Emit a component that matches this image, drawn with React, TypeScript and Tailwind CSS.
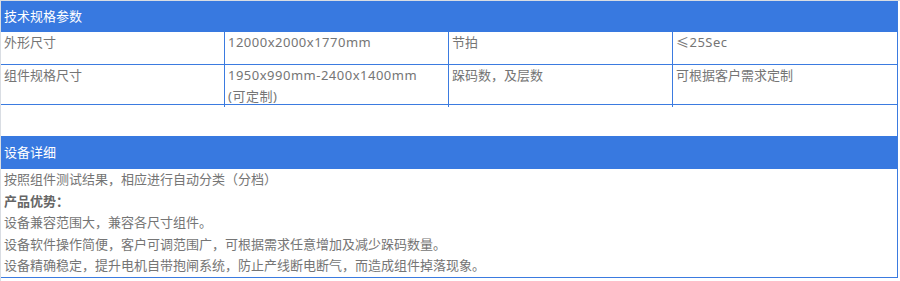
import React from 'react';

const specRows = [
  { h: 'h-[33px]', cells: ['外形尺寸', '12000x2000x1770mm', '节拍', '≤25Sec'] },
  {
    h: 'h-[40px]',
    cells: ['组件规格尺寸', '1950x990mm-2400x1400mm\n(可定制)', '跺码数，及层数', '可根据客户需求定制'],
  },
];

const details = [
  '设备兼容范围大，兼容各尺寸组件。',
  '设备软件操作简便，客户可调范围广，可根据需求任意增加及减少跺码数量。',
  '设备精确稳定，提升电机自带抱闸系统，防止产线断电断气，而造成组件掉落现象。',
];

// latin values render a touch wider in the original
const isLatin = (s: string) => /^[\x20-\x7e≤]/.test(s);

export default function App() {
  return (
    <div
      className="w-[900px] h-[281px] bg-white border-t border-l border-[#d9dde3] text-[13px] text-[#757575]"
      style={{ fontFamily: '"Noto Sans", "Noto Sans CJK SC", sans-serif' }}
    >
      <div className="w-[897px] border-r border-b border-[#3b7be0]">
        {/* 技术规格参数 */}
        <div className="h-[31px] bg-[#3879e0] pl-[3px] leading-[30px] text-white">技术规格参数</div>
        {specRows.map((row, i) => (
          <div key={i} className={`grid grid-cols-4 border-b border-[#3b7be0] ${row.h}`}>
            {row.cells.map((c, j) => (
              <div
                key={j}
                className={`pl-[3px] leading-[21px] whitespace-pre-line ${j < 3 ? 'border-r border-[#3b7be0]' : ''} ${
                  isLatin(c) ? 'tracking-[0.5px]' : ''
                }`}
              >
                {c}
              </div>
            ))}
          </div>
        ))}
        <div className="h-[31px]" />

        {/* 设备详细 */}
        <div className="h-[33px] bg-[#3879e0] pl-[3px] leading-[32px] text-white">设备详细</div>
        <div className="pl-[3px] leading-[21.6px]">
          <p>按照组件测试结果，相应进行自动分类（分档）</p>
          <p className="font-bold text-[#666]">产品优势：</p>
          {details.map((d) => (
            <p key={d}>{d}</p>
          ))}
        </div>
      </div>
    </div>
  );
}
